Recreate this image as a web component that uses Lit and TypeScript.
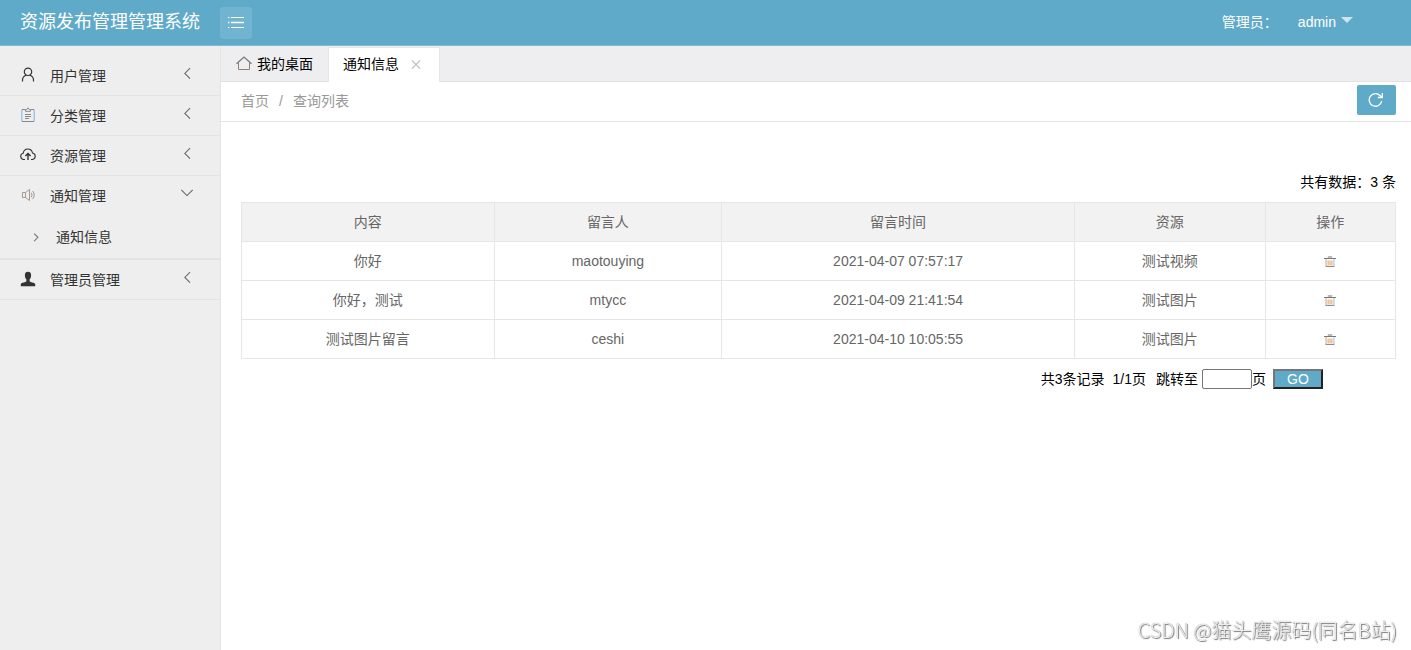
import { LitElement, html, css, svg } from "lit";
import { customElement, state } from "lit/decorators.js";
import { classMap } from "lit/directives/class-map.js";

const icon = (size: number, body: unknown) => html`<svg
  class="icon" width=${size} height=${size} viewBox="0 0 16 16" fill="none"
  stroke="currentColor" stroke-width="1.2" aria-hidden="true">${body}</svg>`;

const icons = {
  user: svg`<circle cx="8" cy="4.800" r="3.700"/><path d="M2.500 14.500v-1.500c0-2.400 1.500-4 3.700-4.700M13.500 14.500v-1.500c0-2.400-1.500-4-3.700-4.700"/>`,
  board: svg`<path stroke="#8ebbe6" d="M1.800 2.500v12M14.200 2.500v12"/><path stroke="#888" stroke-width="1" d="M2 2.500h3.200M10.800 2.500h3.200M2 14.500h12M5.500 4.300h5V2.500H9.300L8 .8 6.700 2.500H5.500zM5 7.500h6M5 9.500h6M5 11.500h4"/>`,
  cloud: svg`<path stroke-width="1.100" d="M5 12.500H3.600A3.200 3.200 0 0 1 3.200 6.200C3.600 3.500 5.400 2 7.800 2s4.200 1.500 4.700 4a3.300 3.300 0 0 1 0 6.500H11"/><path stroke-width="1.400" d="M8 13V6.600M5.400 9 8 6.500 10.600 9"/>`,
  sound: svg`<path stroke="#a59a91" stroke-width="1" d="M2.500 5.500h3v5h-3zM5.500 5.500l4-3v11l-4-3M11.300 5.800q1.500 2.200 0 4.400M12.600 4q3.200 4 0 8"/>`,
  admin: svg`<path fill="currentColor" stroke="none" d="M8 .8c2.300 0 3.300 1.500 3.100 3.600-.1 1.800-.7 3.200-1.500 4v1.800c.5 1 4.900 1.300 5.600 2.700v2.300H.8v-2.300c.7-1.400 5.100-1.700 5.600-2.700V8.400c-.8-.8-1.400-2.200-1.500-4C4.700 2.300 5.700.8 8 .8z"/>`,
  home: svg`<path stroke="#777" stroke-width="1.200" d="M.5 7.800 8 1l7.500 6.800"/><path stroke="#93806f" stroke-width="1" d="M2.500 6.500v7h11v-7"/>`,
  left: svg`<path stroke="#666" d="M11.500 2.500 5.500 8.500l6 6"/>`,
  down: svg`<path stroke="#666" d="M1.500 4.500 8 11l6.500-6.500"/>`,
  right: svg`<path stroke="#777" stroke-width="1.800" d="M5 2.500 11 8.500l-6 6"/>`,
  close: svg`<path stroke="#c2c2c2" stroke-width="2" d="M1.500 2.500l13 13M14.500 2.500l-13 13"/>`,
  list: svg`<path stroke="#fff" stroke-width="1" d="M0 2.500h1.500M3 2.500h13M0 12.500h1.500M3 12.500h13"/><path stroke="#fff" stroke-width="1.500" d="M0 7.500h1.500M3 7.500h13"/>`,
  refresh: svg`<path stroke="#fff" stroke-width="1.300" d="M13.700 9.200A6.300 6.300 0 1 1 12 3.500L13.800 5.200M14.300 1v4.500H9.800"/>`,
  trash: svg`<path stroke="#777" stroke-width="1.400" d="M0 3.300h16M5 1.300h6"/><path stroke="#8c8c8c" stroke-width="1.400" d="M2 14h12"/><path stroke="#d3a58a" stroke-width="1.400" d="M2.700 4v9.500"/><path stroke="#9cc4e2" stroke-width="1.400" d="M13.300 4v9.500"/><path stroke="#e5a869" stroke-width="1.500" d="M5.500 6v6.500M8 6v6.500M10.500 6v6.500"/>`,
};

interface MenuItem {
  label: string;
  glyph: keyof typeof icons;
  children?: string[];
}

const MENU: MenuItem[] = [
  { label: "用户管理", glyph: "user" },
  { label: "分类管理", glyph: "board" },
  { label: "资源管理", glyph: "cloud" },
  { label: "通知管理", glyph: "sound", children: ["通知信息"] },
  { label: "管理员管理", glyph: "admin" },
];

const COLUMNS = ["内容", "留言人", "留言时间", "资源", "操作"];

const ROWS = [
  ["你好", "maotouying", "2021-04-07 07:57:17", "测试视频"],
  ["你好，测试", "mtycc", "2021-04-09 21:41:54", "测试图片"],
  ["测试图片留言", "ceshi", "2021-04-10 10:05:55", "测试图片"],
];

@customElement("app-root")
export class AppRoot extends LitElement {
  @state() private open = "通知管理";

  static styles = css`
    :host {
      display: flex;
      flex-direction: column;
      min-height: 100vh;
      font: 14px/20px "Liberation Sans", "Noto Sans CJK SC", sans-serif;
      color: #000;
      background: #fff;
    }
    * { box-sizing: border-box; }
    a { color: inherit; text-decoration: none; }
    button { font: inherit; color: inherit; cursor: pointer; }
    .icon { display: block; flex: none; }
    header {
      display: flex;
      align-items: center;
      height: 46px;
      background: #5faac8;
      border-bottom: 1px solid #7fbad2;
      color: #fff;
    }
    .brand { width: 220px; padding: 0 0 2px 20px; font-size: 18px; line-height: 44px; }
    .toggle {
      display: grid;
      place-items: center;
      width: 32px;
      height: 32px;
      padding: 0;
      border: 0;
      border-radius: 3px;
      background: #71b4cf;
    }
    .account { display: flex; align-items: center; gap: 20px; margin-left: auto; padding: 0 58px 2px 0; }
    .who { display: flex; align-items: center; gap: 5px; }
    .caret { border: 6px solid transparent; border-top-color: #cfe5ee; border-bottom: 0; margin-bottom: 4px; }
    .body { display: flex; flex: 1; }
    nav.side {
      flex: none;
      width: 221px;
      padding-top: 10px;
      background: #eee;
      border-right: 1px solid #e5e5e5;
      color: #333;
    }
    ul { list-style: none; margin: 0; padding: 0; }
    .side li { border-bottom: 1px solid #e3e3e3; }
    .entry {
      display: flex;
      align-items: center;
      width: 100%;
      height: 39px;
      padding: 0 26px 0 20px;
      border: 0;
      background: none;
      text-align: left;
    }
    .glyph { padding-bottom: 2px; }
    .entry .label { flex: 1; padding-left: 14px; }
    .arrow { padding-bottom: 6px; }
    .sub { display: none; }
    .sub.open { display: block; }
    .sub a { display: flex; align-items: center; gap: 15px; height: 43px; padding-left: 31px; }
    main { flex: 1; min-width: 0; }
    .tabs { display: flex; align-items: flex-end; height: 36px; background: #eeeef0; border-bottom: 1px solid #e2e2e4; }
    .tab { display: flex; align-items: center; height: 35px; padding: 0 15px; gap: 5px; }
    .tab.current {
      margin-bottom: -1px;
      padding: 0 18px 2px 14px;
      gap: 12px;
      background: #fff;
      border: 1px solid #e6e6e8;
      border-bottom: 0;
    }
    .close { padding: 0; border: 0; background: none; }
    .crumbs {
      display: flex;
      align-items: center;
      height: 40px;
      padding: 0 15px 2px 20px;
      border-bottom: 1px solid #e5e5e5;
      color: #999;
    }
    .sep { padding: 0 10px; }
    .refresh {
      display: grid;
      place-items: center;
      width: 39px;
      height: 30px;
      margin: 0 0 2px auto;
      padding-right: 2px;
      border-radius: 2px;
      background: #5faac8;
    }
    .content { padding: 50px 15px 20px 20px; }
    .total { margin-bottom: 10px; text-align: right; }
    table { width: 100%; border-collapse: collapse; table-layout: fixed; color: #666; }
    th, td {
      height: 39px;
      padding: 9px 15px;
      border: 1px solid #e6e6e6;
      font-weight: 400;
      text-align: center;
    }
    th { background: #f2f2f2; }
    col.text { width: 21.9%; }
    col.name { width: 19.7%; }
    col.time { width: 30.6%; }
    col.source { width: 16.5%; }
    .delete { display: inline-block; vertical-align: middle; }
    .pager { display: flex; justify-content: flex-end; align-items: center; margin-top: 10px; padding-right: 73px; }
    .pages { padding: 0 10px 0 8px; }
    .jump {
      width: 50px;
      height: 20px;
      margin-left: 4px;
      padding: 1px 2px;
      border: 1px solid #767676;
      border-radius: 2px;
      font: inherit;
    }
    .go {
      width: 50px;
      height: 20px;
      margin-left: 7px;
      padding: 0;
      border: 2px solid;
      border-color: #767676 #222 #222 #767676;
      background: #5faac8;
      color: #fff;
      line-height: 16px;
    }
    .watermark {
      position: fixed;
      right: 14px;
      bottom: 6px;
      font-family: "Noto Sans CJK SC", sans-serif;
      font-size: 20px;
      font-weight: 300;
      line-height: 28px;
      color: #eee;
      text-shadow: 1px 1px 1px #777, 0 0 1px #888;
    }
  `;

  private entry(item: MenuItem) {
    const open = this.open === item.label;
    return html`<li>
      <button class="entry" aria-expanded=${open} @click=${() => (this.open = open ? "" : item.label)}>
        <span class="glyph">${icon(16, icons[item.glyph])}</span>
        <span class="label">${item.label}</span>
        <span class="arrow">${icon(14, open ? icons.down : icons.left)}</span>
      </button>
      ${item.children
        ? html`<ul class=${classMap({ sub: true, open })}>
            ${item.children.map((c) => html`<li><a href="#">${icon(10, icons.right)}${c}</a></li>`)}
          </ul>`
        : ""}
    </li>`;
  }

  render() {
    return html`
      <header>
        <a class="brand" href="#">资源发布管理管理系统</a>
        <button class="toggle" aria-label="菜单">${icon(16, icons.list)}</button>
        <div class="account">
          <span>管理员：</span>
          <a class="who" href="#">admin<span class="caret"></span></a>
        </div>
      </header>
      <div class="body">
        <nav class="side"><ul>${MENU.map((m) => this.entry(m))}</ul></nav>
        <main>
          <div class="tabs">
            <a class="tab" href="#">${icon(16, icons.home)}我的桌面</a>
            <div class="tab current">
              <a href="#">通知信息</a>
              <button class="close" aria-label="关闭">${icon(10, icons.close)}</button>
            </div>
          </div>
          <div class="crumbs">
            <a href="#">首页</a><span class="sep">/</span><a href="#">查询列表</a>
            <a class="refresh" href="#" aria-label="刷新">${icon(16, icons.refresh)}</a>
          </div>
          <section class="content">
            <div class="total">共有数据：3 条</div>
            <table>
              <colgroup>
                <col class="text" /><col class="name" /><col class="time" /><col class="source" /><col />
              </colgroup>
              <thead><tr>${COLUMNS.map((c) => html`<th scope="col">${c}</th>`)}</tr></thead>
              <tbody>
                ${ROWS.map((r) => html`<tr>
                  ${r.map((v) => html`<td>${v}</td>`)}
                  <td><a class="delete" href="#" aria-label="删除">${icon(12, icons.trash)}</a></td>
                </tr>`)}
              </tbody>
            </table>
            <div class="pager">
              <span>共3条记录</span><span class="pages">1/1页</span>
              <label for="page">跳转至</label><input class="jump" id="page" type="text" />
              <span>页</span><button class="go">GO</button>
            </div>
          </section>
        </main>
      </div>
      <div class="watermark">CSDN @猫头鹰源码(同名B站)</div>
    `;
  }
}
